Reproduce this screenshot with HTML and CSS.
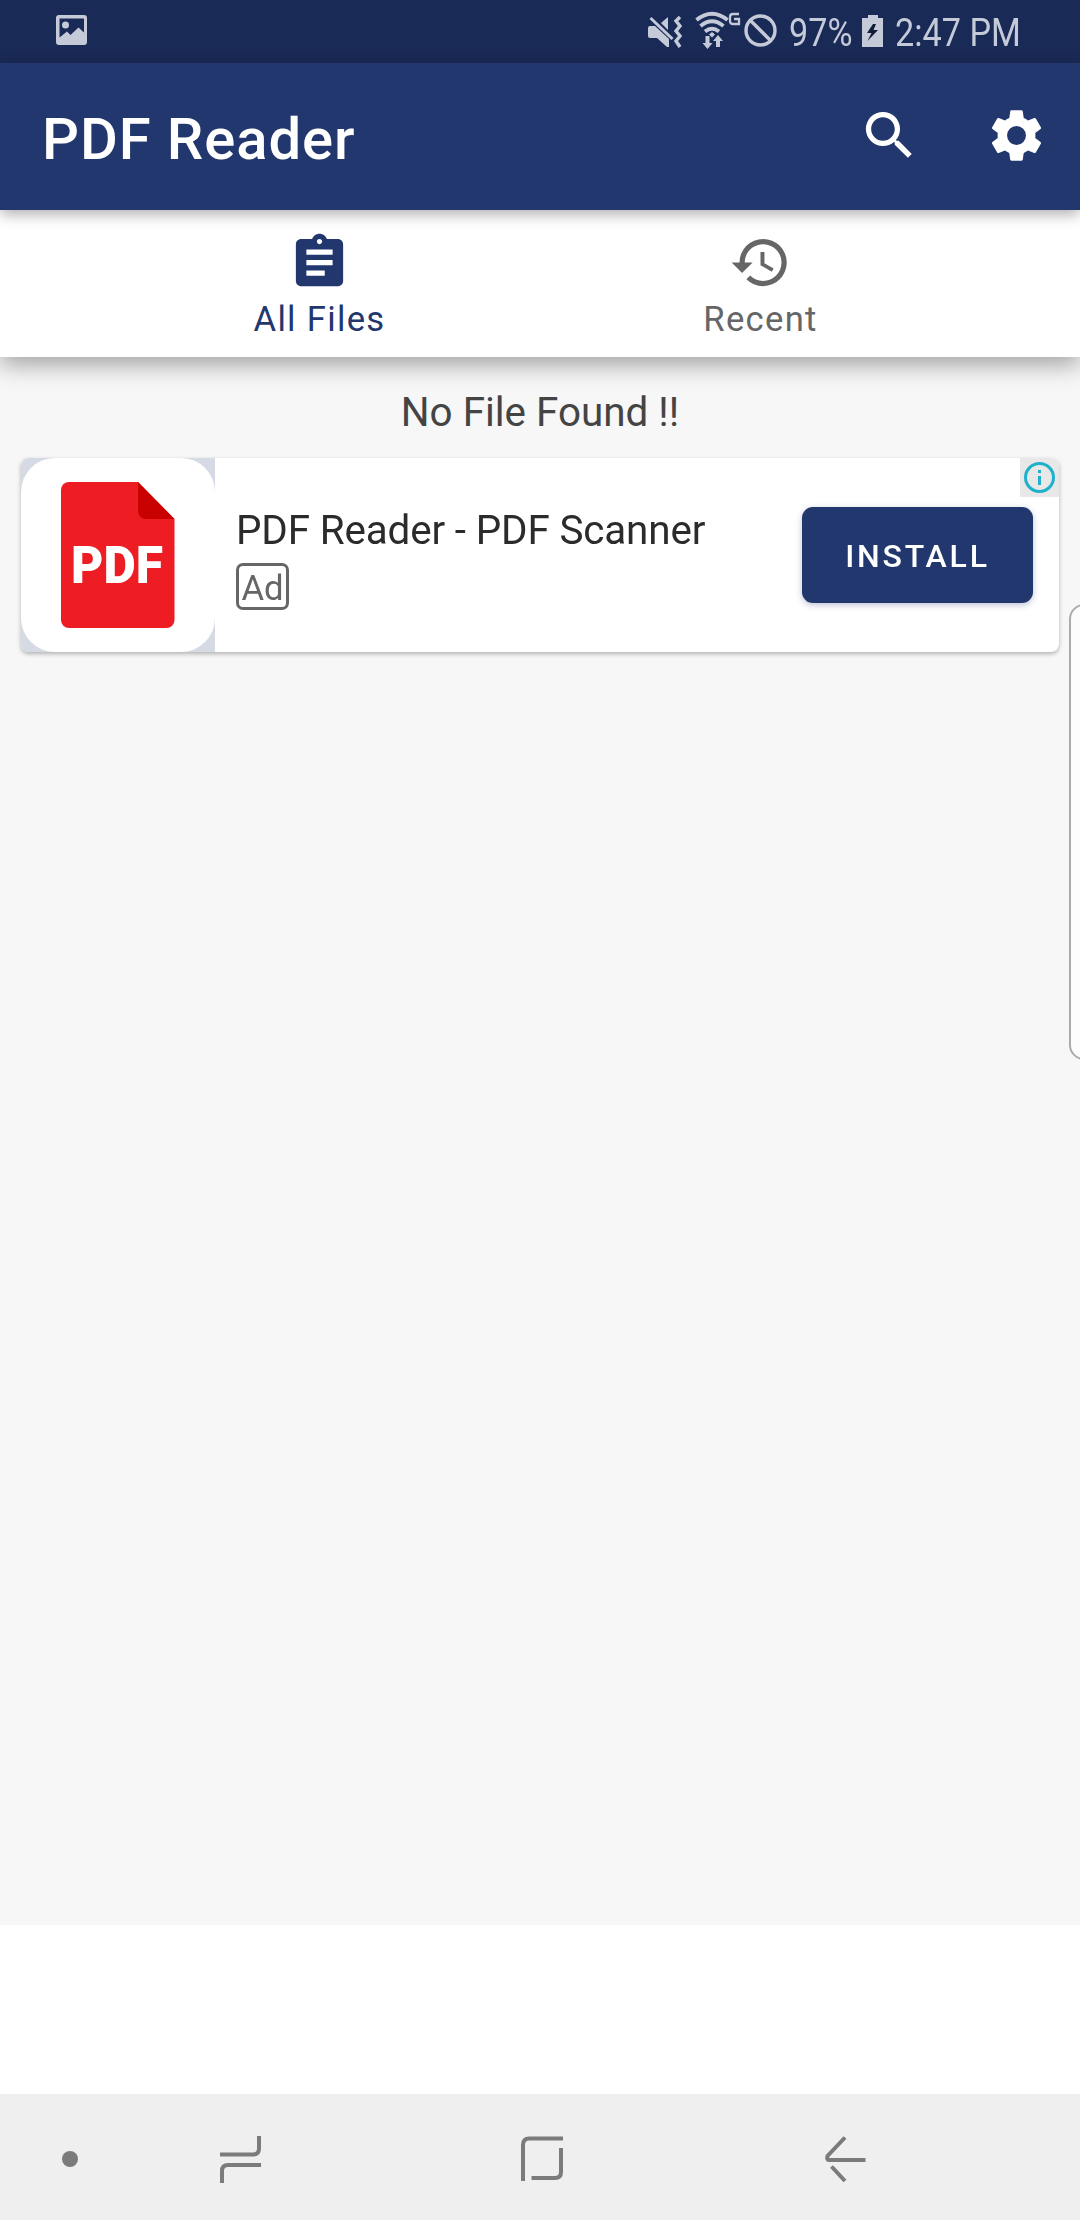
FILE: index.html
```html
<!DOCTYPE html>
<html lang="en">
<head>
<meta charset="utf-8">
<title>PDF Reader</title>
<link rel="stylesheet" href="styles.css">
</head>
<body>
<div class="screen">
  <div class="status">
    <svg class="status-photo" width="32" height="31" viewBox="0 0 32 31"><path fill-rule="evenodd" d="M3 0h25a3 3 0 0 1 3 3v24a3 3 0 0 1-3 3H3a3 3 0 0 1-3-3V3a3 3 0 0 1 3-3zM3.500 3.500v19L11 16.500l3.500 3.500L22.500 12.500 28 17.500V3.500z"/><circle cx="9.500" cy="10" r="3.500"/></svg>
    <svg class="status-mute" width="34" height="34" viewBox="0 0 34 34"><path d="M0 13q0-2 2-2h5l14 13v8h-2L9 23H2q-2 0-2-2zM13 8l7-6v13z"/><path class="line" d="M2.500 3l22 21" stroke-width="3"/><path class="line" d="M32 2l-4 4 4 5-4 5 4 5-4 5 4 6" stroke-width="3.400"/></svg>
    <svg class="status-wifi" width="46" height="39" viewBox="0 0 46 39"><path class="line" stroke-width="3.800" d="M1.500 9Q17-3.500 32.500 9M5.500 15Q17 5.500 28.500 15M10 20.500q7-5.500 14 0"/><path d="M17 21l3 2.500-3 3-3-3zM10.500 25h4v7h3l-5 6-5-6h3zM21 36v-6h-3l5-6 5 6h-3v6z"/><path class="line" stroke-width="2.300" d="M44 3h-6q-3 0-3 3v4q0 3 3 3h6V8h-5"/></svg>
    <svg class="status-block" width="33" height="33" viewBox="0 0 33 33"><circle class="line" cx="16.500" cy="16.500" r="14.500" stroke-width="3.400"/><path class="line" stroke-width="3.400" d="M6 6l21 21"/></svg>
    <span class="battery-text"><span class="condensed">97%</span></span>
    <svg class="status-battery" width="22" height="32" viewBox="0 0 22 32"><path d="M6 0h10v3h5v29H0V3h6z"/><path class="bolt" d="M11 9L5 18h4.500L5.500 26 16 15h-4.500l2.500-6z"/></svg>
    <span class="clock"><span class="condensed">2:47 PM</span></span>
  </div>
  <header class="appbar">
    <h1 class="title">PDF Reader</h1>
    <svg class="icon search" viewBox="0 0 24 24"><path d="M15.500 14h-.79l-.28-.27A6.471 6.471 0 0 0 16 9.500 6.500 6.500 0 1 0 9.500 16c1.610 0 3.090-.590 4.230-1.570l.27.280v.790l5 4.990L20.490 19l-4.990-5zm-6 0C7.010 14 5 11.990 5 9.500S7.010 5 9.500 5 14 7.010 14 9.500 11.990 14 9.500 14z"/></svg>
    <svg class="icon" viewBox="0 0 24 24"><path d="M19.140 12.940c.04-.3.060-.610.060-.940s-.020-.640-.070-.940l2.030-1.580a.49.49 0 0 0 .12-.610l-1.920-3.320a.488.488 0 0 0-.590-.220l-2.390.96c-.5-.38-1.030-.7-1.620-.940l-.36-2.540a.484.484 0 0 0-.48-.41h-3.840c-.24 0-.43.170-.47.410l-.36 2.540c-.59.240-1.130.570-1.620.940l-2.390-.96c-.22-.080-.47 0-.59.220L2.740 8.870c-.12.210-.08.470.12.610l2.030 1.580c-.05.300-.09.630-.09.940s.020.640.070.940l-2.030 1.580a.49.49 0 0 0-.12.610l1.920 3.320c.12.220.37.290.59.220l2.390-.96c.5.380 1.030.7 1.620.940l.36 2.540c.05.240.24.410.48.410h3.840c.24 0 .44-.17.470-.41l.36-2.540c.59-.24 1.130-.56 1.620-.94l2.390.96c.22.080.47 0 .59-.22l1.920-3.320c.12-.22.070-.47-.12-.61l-2.010-1.580zM12 15.600A3.600 3.600 0 1 1 12 8.400a3.600 3.600 0 0 1 0 7.200z"/></svg>
  </header>
  <nav class="tabs">
    <div class="tab active">
      <svg class="icon" viewBox="0 0 24 24"><path d="M19 3h-4.180C14.400 1.840 13.300 1 12 1c-1.300 0-2.400.840-2.820 2H5c-1.100 0-2 .9-2 2v14c0 1.100.9 2 2 2h14c1.100 0 2-.9 2-2V5c0-1.100-.9-2-2-2zm-7 0c.55 0 1 .45 1 1s-.45 1-1 1-1-.45-1-1 .45-1 1-1zm2 14H7v-2h7v2zm3-4H7v-2h10v2zm0-4H7V7h10v2z"/></svg>
      <span class="tab-label">All Files</span>
    </div>
    <div class="tab">
      <svg class="icon" viewBox="0 0 24 24"><path d="M13 3a9 9 0 0 0-9 9H1l3.890 3.890.07.140L9 12H6c0-3.870 3.130-7 7-7s7 3.130 7 7-3.130 7-7 7c-1.930 0-3.680-.79-4.940-2.060l-1.420 1.420A8.954 8.954 0 0 0 13 21a9 9 0 0 0 0-18zm-1 5v5l4.280 2.540.72-1.210-3.500-2.080V8H12z"/></svg>
      <span class="tab-label">Recent</span>
    </div>
  </nav>
  <main class="content">
    <p class="empty">No File Found !!</p>
    <section class="card">
      <div class="ad-icon">
        <svg width="194" height="194" viewBox="0 0 194 194"><rect width="194" height="194" rx="34" fill="#fff"/><path fill="#ee1d23" d="M48 24h69l36.500 37v101a8 8 0 0 1-8 8H48a8 8 0 0 1-8-8V32a8 8 0 0 1 8-8z"/><path fill="#c90000" d="M117 24l36.500 37H125a8 8 0 0 1-8-8z"/><text class="logo-text" x="50" y="124.500" textLength="92" lengthAdjust="spacingAndGlyphs">PDF</text></svg>
      </div>
      <div class="ad-text">
        <span class="ad-title">PDF Reader - PDF Scanner</span>
        <span class="ad-badge">Ad</span>
      </div>
      <button class="install">INSTALL</button>
      <svg class="info" viewBox="0 0 39 39"><circle cx="19.500" cy="19.500" r="14" fill="none" stroke="#1eb1ca" stroke-width="3"/><path fill="#1eb1ca" d="M18 12h3v3h-3zM18 18h3v9h-3z"/></svg>
    </section>
  </main>
  <div class="banner"></div>
  <footer class="navbar">
    <svg class="nav-dot" width="16" height="16" viewBox="0 0 16 16"><circle cx="8" cy="8" r="8"/></svg>
    <svg class="nav-recents" width="41" height="48" viewBox="0 0 41 48"><path d="M0 19.500h33q6 0 6-6V1M41 30H8q-6 0-6 6v12"/></svg>
    <svg class="nav-home" width="42" height="48" viewBox="0 0 42 48"><path d="M2 46V10q0-6.500 6-6.500h34M40 13v24q0 6-6 6H10.500"/></svg>
    <svg class="nav-back" width="41" height="48" viewBox="0 0 41 48"><path d="M20 2.500L2.500 21Q1.500 25 4 25h36.500M6.500 31.500L20 46"/></svg>
  </footer>
  <div class="edge-handle"></div>
</div>
</body>
</html>
```
FILE: styles.css
```css
* { box-sizing: border-box; }
body { margin: 0; font-family: Roboto, "Liberation Sans", sans-serif; }
.screen { position: relative; width: 1080px; height: 2220px; overflow: hidden; display: flex; flex-direction: column; background: #fff; }
svg { display: block; flex: none; }

.status { flex: none; height: 63px; padding: 0 59px 0 56px; display: flex; align-items: flex-start; background: #1a2a56; color: #c5cad9; fill: #c5cad9; font-size: 39px; line-height: 66px; white-space: nowrap; }
.status .line { fill: none; stroke: #c5cad9; }
.status-photo { margin: 15px auto 0 0; }
.status-mute { margin: 15px 13px 0 0; }
.status-wifi { margin: 11px 3px 0 0; }
.status-block { margin: 14px 12px 0 0; }
.battery-text { width: 73px; }
.status-battery { margin-top: 15px; }
.bolt { fill: #111c38; }
.clock { width: 126px; margin-left: 11px; }
.condensed { display: inline-block; transform: scaleX(.877); transform-origin: left; }

.appbar { flex: none; height: 147px; padding: 0 32px 2px 42px; display: flex; align-items: center; gap: 64px; background: #22376d; color: #fff; position: relative; z-index: 3; box-shadow: 0 4px 14px rgba(0,0,0,.33); }
.title { flex: 1; margin: 6px 0 0; font-size: 58px; line-height: 70px; font-weight: 500; letter-spacing: .9px; }
.icon { width: 63px; height: 63px; fill: currentColor; }

.tabs { flex: none; height: 147px; display: flex; justify-content: center; background: #fff; position: relative; z-index: 2; box-shadow: 0 8px 22px rgba(0,0,0,.34); }
.tab { width: 441px; padding-top: 21px; display: flex; flex-direction: column; align-items: center; color: #666; }
.tab.active { color: #22376d; }
.tab-label { margin-top: 4px; font-size: 34.650px; line-height: 42px; letter-spacing: 1.300px; }

.content { flex: none; height: 1568px; padding: 32px 21px 0; background: #f7f7f7; }
.empty { margin: 0; height: 69px; text-align: center; color: #444; font-size: 40.400px; line-height: 48px; }
.card { position: relative; height: 194px; display: flex; background: #fff; border-radius: 8px; overflow: hidden; filter: drop-shadow(0 2px 2px rgba(0,0,0,.28)); }
.ad-icon { width: 194px; background: #d5dae5; }
.logo-text { fill: #fff; font: 900 51px Roboto, sans-serif; }
.ad-text { flex: 1; padding: 49px 0 0 21px; display: flex; flex-direction: column; align-items: flex-start; }
.ad-title { font-size: 40.400px; line-height: 48px; letter-spacing: -.15px; color: #2b2b2b; white-space: nowrap; }
.ad-badge { width: 53px; height: 47px; margin-top: 8px; border: 3px solid #666; border-radius: 7px; text-align: center; font-size: 34.650px; line-height: 44px; color: #666; }
.install { width: 231px; height: 96px; margin: 49px 26px 0 0; padding: 2px 0 0; border: 0; border-radius: 11px; background: #22376d; color: #fff; font: 500 32px Roboto, sans-serif; letter-spacing: 2.800px; box-shadow: 0 2px 6px rgba(34,55,109,.3); }
.info { position: absolute; top: 0; right: 0; width: 39px; height: 39px; background: #e8e8e8; }

.banner { flex: 1; }
.navbar { flex: none; height: 126px; padding: 0 214px 0 62px; display: flex; align-items: center; background: #efefef; }
.navbar svg { margin-top: 4px; fill: none; stroke: #7b7b7b; stroke-width: 4; }
.navbar .nav-dot { fill: #7b7b7b; stroke: none; }
.nav-recents { margin-left: 142px; }
.nav-home { margin-left: 260px; }
.nav-back { margin-left: 262px; }
.edge-handle { position: absolute; left: 1069px; top: 604px; width: 30px; height: 456px; border: 2px solid #ababab; border-radius: 15px; background: #fcfcfc; }
```
